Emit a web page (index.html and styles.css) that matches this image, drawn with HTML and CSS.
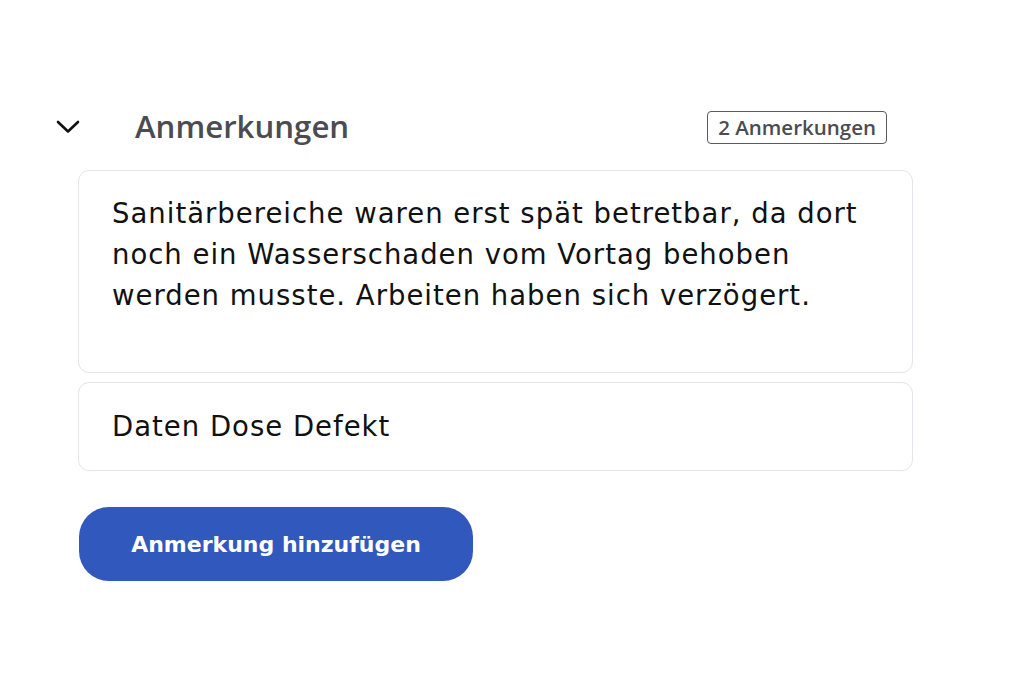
FILE: index.html
```html
<!DOCTYPE html>
<html lang="de">
<head>
<meta charset="utf-8">
<title>Anmerkungen</title>
<link rel="stylesheet" href="styles.css">
</head>
<body>
<section class="notes">
  <header class="notes-head">
    <button class="toggle" aria-label="Einklappen">
      <svg width="24" height="14" viewBox="0 0 24 14"><path d="M2 2 L12 11.5 L22 2" fill="none" stroke="#111" stroke-width="2.6" stroke-linecap="round" stroke-linejoin="round"/></svg>
    </button>
    <h2 class="title">Anmerkungen</h2>
    <span class="badge">2 Anmerkungen</span>
  </header>
  <div class="list">
    <div class="card card-tall">Sanitärbereiche waren erst spät betretbar, da dort noch ein Wasserschaden vom Vortag behoben werden musste. Arbeiten haben sich verzögert.</div>
    <div class="card">Daten Dose Defekt</div>
  </div>
  <button class="add">Anmerkung hinzufügen</button>
</section>
</body>
</html>
```
FILE: styles.css
```css
html, body {
  margin: 0;
  padding: 0;
  background: #fff;
}
.notes {
  padding: 106px 0 0 56px;
  width: 857px;
  display: flex;
  flex-direction: column;
}
.notes-head {
  display: flex;
  align-items: center;
  height: 40px;
}
.toggle {
  border: 0;
  background: none;
  padding: 0;
  width: 24px;
  height: 14px;
  display: flex;
  margin-top: 2px;
}
.title {
  margin: 0 0 0 55px;
  font-family: "Open Sans", sans-serif;
  font-weight: 600;
  font-size: 31.2px;
  color: #4b4c51;
  flex: 1;
}
.badge {
  font-family: "Open Sans", sans-serif;
  font-weight: 600;
  font-size: 20.5px;
  line-height: 29px;
  color: #4b4c51;
  border: 1.5px solid #5a5a5f;
  border-radius: 4px;
  padding: 1px 10px 1px 10px;
  margin-right: 26px;
  margin-top: 2px;
}
.list {
  margin-top: 24px;
  margin-left: 22px;
  display: flex;
  flex-direction: column;
  gap: 9px;
}
.card {
  border: 1px solid #e3e5eb;
  border-radius: 11px;
  font-family: "DejaVu Sans", sans-serif;
  font-size: 27.5px;
  line-height: 41px;
  color: #111;
  padding: 22px 40px 24px 33px;
  letter-spacing: 1px;
}
.card-tall {
  min-height: 155px;
}
.card + .card {
  padding-top: 23px;
  padding-bottom: 23px;
}
.add {
  margin: 36px 0 0 23px;
  align-self: flex-start;
  width: 394px;
  height: 74px;
  border: 0;
  border-radius: 30px;
  background: #3158bd;
  color: #fff;
  font-family: "DejaVu Sans", sans-serif;
  font-weight: bold;
  font-size: 22px;
}
```
